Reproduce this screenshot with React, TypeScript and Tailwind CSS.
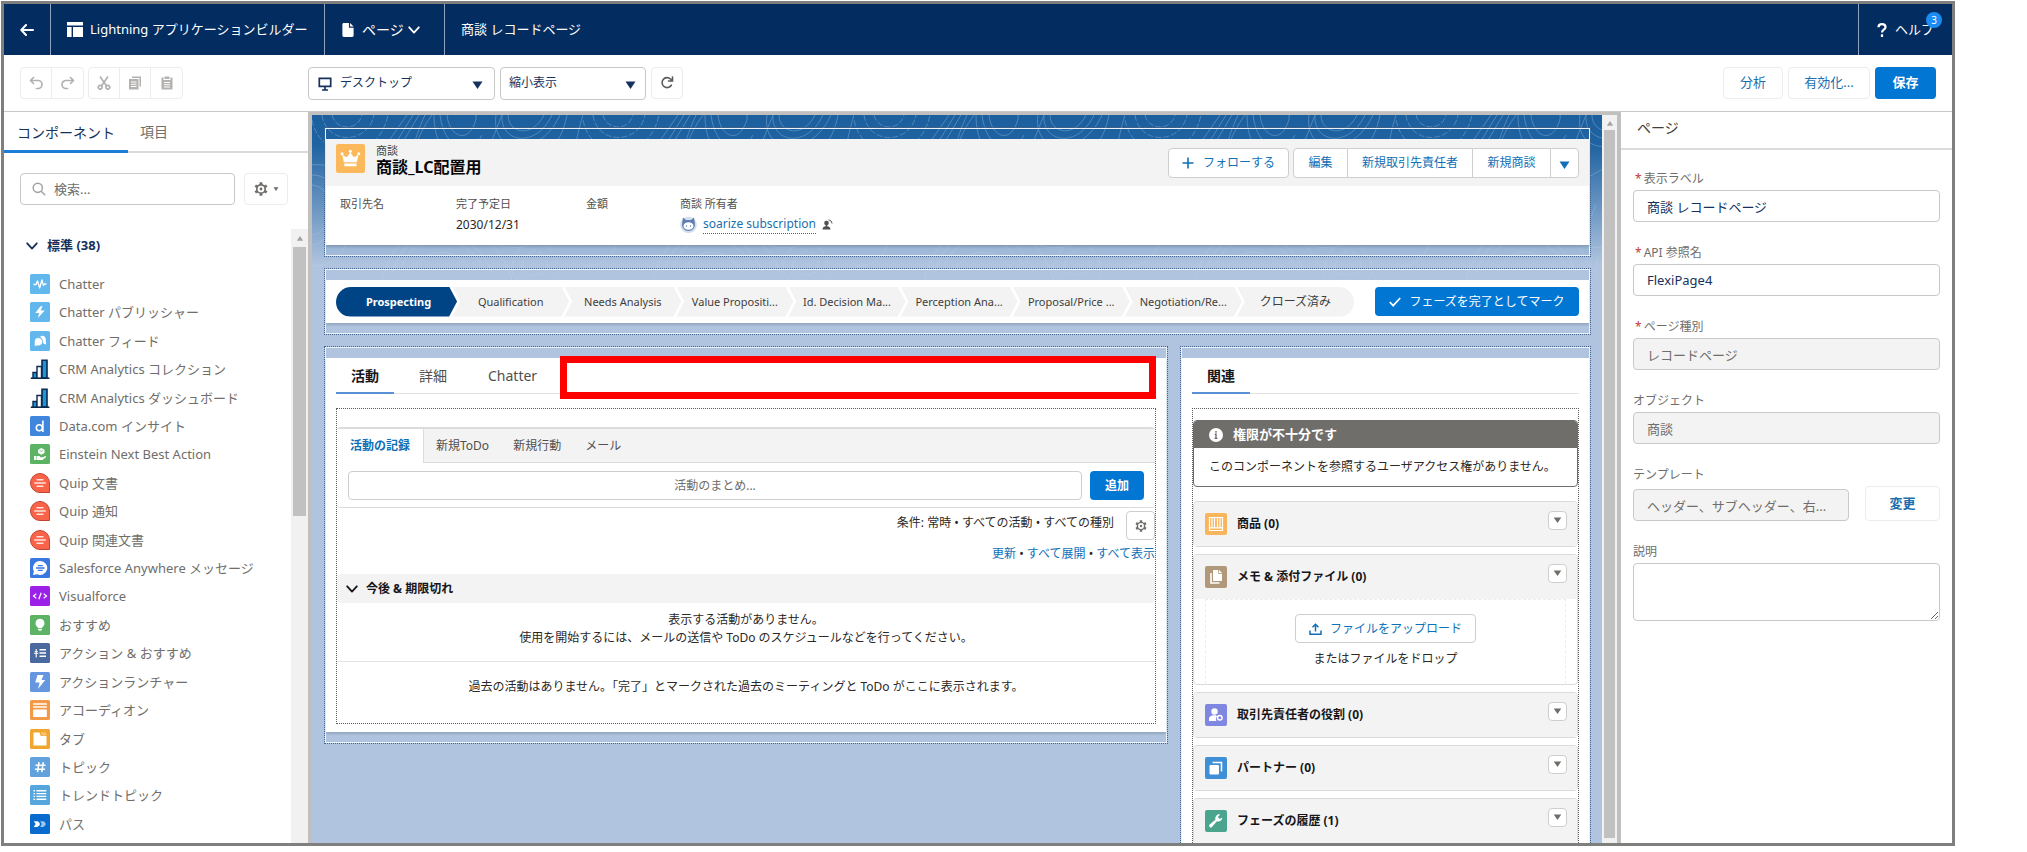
import React from "react";
import type { ReactNode } from "react";

const Tri = ({ className = "" }: { className?: string }) => (
  <svg viewBox="0 0 10 8" className={className} fill="currentColor" aria-hidden="true">
    <path d="M0 0.5h10L5 8z" />
  </svg>
);

const Chevron = ({ className = "" }: { className?: string }) => (
  <svg viewBox="0 0 12 8" className={className} fill="none" stroke="currentColor" strokeWidth="1.8" strokeLinecap="round" strokeLinejoin="round" aria-hidden="true">
    <path d="M1.2 1.3 6 6.6l4.8-5.3" />
  </svg>
);

const Gear = ({ className = "" }: { className?: string }) => (
  <svg viewBox="0 0 20 20" className={className} fill="none" stroke="currentColor" aria-hidden="true">
    <circle cx="10" cy="10" r="6" strokeWidth="2.400" />
    <circle cx="10" cy="10" r="2" fill="currentColor" stroke="none" />
    <path strokeWidth="4" d="M10 .5v3.500M10 16v3.500M1.800 5.200l3 1.800M15.200 13l3 1.800M1.800 14.800l3-1.800M15.200 7l3-1.800" />
  </svg>
);

const Tile = ({ color, children }: { color: string; children: ReactNode }) => (
  <svg viewBox="0 0 20 20" className="size-5 shrink-0" aria-hidden="true">
    <rect width="20" height="20" rx="1.6" fill={color} />
    {children}
  </svg>
);

const Bars = () => (
  <svg viewBox="0 0 20 20" className="size-5 shrink-0" aria-hidden="true">
    <path d="M3 19v-5.500h4V19" fill="#1b96d8" stroke="#0b2a4f" strokeWidth="1.4" />
    <path d="M7 19V7.500h4.500V19" fill="#fff" stroke="#0b2a4f" strokeWidth="1.4" />
    <path d="M12 19V1.200h5V19z" fill="#1b96d8" stroke="#0b2a4f" strokeWidth="1.6" />
    <path d="M.8 19.200h18.600" stroke="#0b2a4f" strokeWidth="1.600" />
  </svg>
);

const Quip = () => (
  <svg viewBox="0 0 20 20" className="size-5 shrink-0" aria-hidden="true">
    <path d="M10 .5a9.500 9.500 0 0 1 9.500 9.500v9.500H10A9.500 9.500 0 0 1 10 .5z" fill="#f9634a" stroke="#c14430" />
    <path d="M6.500 6.800h7M4.200 10h11.600M6.500 13.200h7" stroke="#ffe3dc" strokeWidth="1.500" />
  </svg>
);

const Bolt = ({ big = false }: { big?: boolean }) =>
  big ? (
    <path d="M7.500 3h6l-2 5h3.700L8 17l1.600-6.500H5.200z" fill="#fff" />
  ) : (
    <path d="M10.500 4.200 5.300 11h3.800l-1.200 4.900 6.800-7.400h-4.100l2-4.300z" fill="#fff" />
  );

const components: { name: string; icon: ReactNode }[] = [
  { name: "Chatter", icon: <Tile color="#62b7ed"><path d="M3.500 10.500H6l1.500-3.500 2.200 7 2.200-8 1.600 5.500 1-1.500h2" fill="none" stroke="#fff" strokeWidth="1.300" strokeLinejoin="round" /></Tile> },
  { name: "Chatter パブリッシャー", icon: <Tile color="#62b7ed"><Bolt /></Tile> },
  { name: "Chatter フィード", icon: <Tile color="#62b7ed"><path d="M10 5.500c3-1.800 6.300.4 5.800 3.500l.3 4.500-2.600-.7c-.3-3.600-1.500-5.200-3.500-7.300z" fill="#fff" /><path d="M8 6.800c3 0 4.500 2 4.500 4s-1.700 4-4.500 4c-1 0-3.600.3-3.600.3l.2-3.600C4.200 8.600 5.600 6.800 8 6.800z" fill="#fff" stroke="#62b7ed" strokeWidth=".5" /></Tile> },
  { name: "CRM Analytics コレクション", icon: <Bars /> },
  { name: "CRM Analytics ダッシュボード", icon: <Bars /> },
  { name: "Data.com インサイト", icon: <Tile color="#3f86dc"><circle cx="9.300" cy="11.700" r="3" fill="none" stroke="#fff" strokeWidth="1.600" /><path d="M12.900 4.500V16" stroke="#fff" strokeWidth="1.600" /></Tile> },
  { name: "Einstein Next Best Action", icon: <Tile color="#5cb363"><path d="m11.300 4 3.200 1.700v3.400l-3.200 1.700-3.200-1.700V5.700z" fill="#fff" /><path d="M4 12h2v4H4zM6.500 12h3l1 1.300h2l3-1.300.8 1-3.800 3H6.500z" fill="#fff" /><path d="m9.500 6.400 1.800.9 1.800-.9" stroke="#5cb363" strokeWidth=".7" fill="none" /></Tile> },
  { name: "Quip 文書", icon: <Quip /> },
  { name: "Quip 通知", icon: <Quip /> },
  { name: "Quip 関連文書", icon: <Quip /> },
  { name: "Salesforce Anywhere メッセージ", icon: <Tile color="#3a77e0"><path d="M10.300 3a7 7 0 1 1-3.100 13.300L3 17l.9-3.700A7 7 0 0 1 10.300 3z" fill="#fff" /><path d="M7.800 7.600h5M6 10h8.600M7.800 12.400h5" stroke="#3a77e0" strokeWidth="1.300" /></Tile> },
  { name: "Visualforce", icon: <Tile color="#9b20e8"><path d="M6.300 7.700 3.500 10l2.800 2.300M13.700 7.700l2.800 2.300-2.800 2.300M11.200 6.700l-2.400 6.600" stroke="#fff" strokeWidth="1.200" fill="none" /></Tile> },
  { name: "おすすめ", icon: <Tile color="#5cb363"><path d="M10 3.800a4.500 4.500 0 0 1 2.500 8.200l-.5 1.200H8L7.500 12A4.500 4.500 0 0 1 10 3.800zM8.200 14h3.600v.9l-1 .9H9.200l-1-.9z" fill="#fff" /></Tile> },
  { name: "アクション & おすすめ", icon: <Tile color="#4a6a9f"><path d="M9.500 6.700H16M9.500 10H16M9.500 13.300H16" stroke="#fff" strokeWidth="1.400" /><path d="M6.200 6v8.500M4 10.200h4.300M4.800 8.500h2.800" stroke="#fff" strokeWidth="1.100" /></Tile> },
  { name: "アクションランチャー", icon: <Tile color="#6796e0"><Bolt big /></Tile> },
  { name: "アコーディオン", icon: <Tile color="#f29a48"><path d="M3.200 4h13.600M3.200 7h13.600" stroke="#fff" strokeWidth="1.400" /><rect x="3.200" y="9.500" width="13.600" height="7.500" fill="#fff" /></Tile> },
  { name: "タブ", icon: <Tile color="#f0a62f"><path d="M3.500 3.500h6L10.800 7h5.700v9.500h-13z" fill="#fff" /><path d="M11 4h5M12 5.800h4.500" stroke="#ffd792" strokeWidth="1" /></Tile> },
  { name: "トピック", icon: <Tile color="#62a2dc"><path d="M9 5.200 7.500 15.200M13.300 5.200l-1.500 10M5.500 8.300h10M5 12.200h10" stroke="#fff" strokeWidth="1.500" /></Tile> },
  { name: "トレンドトピック", icon: <Tile color="#54a6dc"><path d="M6.500 5.800h9.800M6.500 8.600h9.800M6.500 11.400h9.800M6.500 14.200h9.800" stroke="#fff" strokeWidth="1.400" /><path d="M3.500 5.800h1.600M3.500 8.600h1.600M3.500 11.400h1.600M3.500 14.200h1.600" stroke="#fff" strokeWidth="1.400" /></Tile> },
  { name: "パス", icon: <Tile color="#0a6bcf"><path d="M3.800 7.200H7c1.600 0 2.900 1.800 2.900 2.900S8.600 13 7 13H3.800l1.800-2.900z" fill="#fff" /><path d="M10.200 7.200h2.600c1.600 0 2.900 1.800 2.900 2.900S14.400 13 12.800 13h-2.600l1.600-2.900z" fill="#9cc8f5" /></Tile> },
];

const stages = ["Qualification", "Needs Analysis", "Value Propositi...", "Id. Decision Ma...", "Perception Ana...", "Proposal/Price ...", "Negotiation/Re...", "クローズ済み"];

const Region = ({ children, className = "" }: { children: ReactNode; className?: string }) => (
  <section className={`border border-dotted border-[#42648f] ${className}`}>
    <div className="border border-[#e8f3fc] py-[10px]">{children}</div>
  </section>
);

const Contours = () => (
  <svg className="absolute inset-x-0 top-0 h-[170px] w-full" aria-hidden="true">
    <defs>
      <pattern id="contours" width="271" height="180" patternUnits="userSpaceOnUse">
        <g fill="none" stroke="#cfe2f5" strokeWidth="1" opacity="0.3">
          <path d="M20 0c4 16 26 16 30 0M10 0c4 30 46 30 52 0M0 5c8 42 66 44 76-5" strokeDasharray="6 2" />
          <path d="M95 0 60 50M101 0 64 60C40 90 60 120 80 100s10-60 40-100M107 0 80 45M113 0C90 50 92 90 130 110s60 10 70-20" />
          <path d="M135 0c2 20 18 28 26 12s-2-12 4-12M128 0c4 34 30 44 42 20M122 0c0 46 34 60 56 30l12-30" />
          <path d="M196 0c0 18 24 24 36 0M190 0c-2 28 34 34 50 0M184 0c-6 40 44 44 64 0" />
          <path d="M255 0c-6 30-20 40-40 50s-60 30-50 60 60 30 80 0 10-60 26-110" />
          <path d="M0 60c20 0 30 20 26 40s-20 30-26 30M0 70c14 2 20 14 18 28S6 120 0 120M0 50c30-4 46 24 40 60s-30 44-40 40" />
          <path d="M90 150c20-40 60-30 80 0M80 158c20-60 80-50 100 0M100 155c20-26 40-22 60 0M70 165c20-80 110-70 130 0" />
          <path d="M200 150c6-26 30-30 42-10s0 30-10 30-34 0-32-20zM210 150c4-16 18-18 24-6s-4 16-10 16-16 0-14-10z" strokeDasharray="9 3" />
        </g>
      </pattern>
      <linearGradient id="fadeDown" x1="0" y1="0" x2="0" y2="1">
        <stop offset="0" stopColor="#fff" />
        <stop offset="1" stopColor="#fff" stopOpacity="0.6" />
      </linearGradient>
      <mask id="contourMask">
        <rect width="100%" height="100%" fill="url(#fadeDown)" />
      </mask>
    </defs>
    <rect width="100%" height="100%" fill="url(#contours)" mask="url(#contourMask)" />
  </svg>
);

const ToolButton = ({ label, children, className = "" }: { label: string; children: ReactNode; className?: string }) => (
  <button type="button" aria-label={label} className={`flex h-[30px] w-[31px] items-center justify-center text-[#b4b2b0] ${className}`}>
    {children}
  </button>
);

function Header() {
  return (
    <header className="flex h-[51px] shrink-0 items-stretch bg-[#032d60] text-[13px] text-white">
      <button type="button" aria-label="戻る" className="flex w-[47px] items-center justify-center border-r border-[#8fa3bf]">
        <svg viewBox="0 0 14 12" className="h-3 w-[14px]" fill="none" stroke="#fff" strokeWidth="2" strokeLinecap="round" strokeLinejoin="round">
          <path d="M6 1 1.300 6 6 11M1.500 6H13" />
        </svg>
      </button>
      <div className="flex w-[274px] items-center gap-[7px] border-r border-[#8fa3bf] pl-4 whitespace-nowrap">
        <svg viewBox="0 0 16 15" className="h-[15px] w-4 shrink-0" fill="#fff">
          <path d="M0 0h16v3.600H0zM0 5h4.600v10H0zM6 5h10v10H6z" />
        </svg>
        Lightning アプリケーションビルダー
      </div>
      <button type="button" className="flex w-[120px] items-center border-r border-[#8fa3bf] pl-[17px] text-[14px]">
        <svg viewBox="0 0 12 15" className="mr-2 h-[14px] w-3" fill="#fff">
          <path d="M1.500 0H7v5h5v8.500c0 .8-.7 1.500-1.500 1.500h-9C.7 15 0 14.300 0 13.500v-12C0 .7.700 0 1.500 0z" />
          <path d="M8.200 0 12 3.800H8.200z" />
        </svg>
        ページ
        <Chevron className="ml-1 h-2 w-3" />
      </button>
      <h1 className="flex flex-1 items-center pl-4">商談 レコードページ</h1>
      <button type="button" className="flex w-[94px] items-center border-l border-[#8fa3bf] pl-[18px]">
        <svg viewBox="0 0 10 14" className="mr-2 h-[14px] w-[10px]" fill="none" stroke="#fff" strokeWidth="2.200">
          <path d="M1.500 4.200c0-4 7-4 7 0 0 2.500-3.500 2.600-3.500 5.300M5 11.300V14" />
        </svg>
        <span className="relative">
          ヘルプ
          <span className="absolute -top-2 -right-2 flex size-4 items-center justify-center rounded-full bg-[#1b8cf2] text-[10px] leading-4">3</span>
        </span>
      </button>
    </header>
  );
}

function Toolbar() {
  return (
    <div className="flex h-[57px] shrink-0 items-center border-b border-[#c9c9c9] bg-white pl-4 pr-4 text-[#16325c]">
      <div className="flex w-[288px] gap-1">
        <div className="flex divide-x divide-[#ececec] rounded border border-[#ececec]">
          <ToolButton label="元に戻す">
            <svg viewBox="0 0 14 14" className="size-[14px]" fill="none" stroke="currentColor" strokeWidth="1.700" strokeLinecap="round" strokeLinejoin="round"><path d="M4.500 1.500 1.500 4.500l3 3M1.500 4.500H9a4 4 0 0 1 0 8H7.500" /></svg>
          </ToolButton>
          <ToolButton label="やり直し">
            <svg viewBox="0 0 14 14" className="size-[14px]" fill="none" stroke="currentColor" strokeWidth="1.700" strokeLinecap="round" strokeLinejoin="round"><path d="m9.500 1.500 3 3-3 3M12.500 4.500H5a4 4 0 0 0 0 8h1.500" /></svg>
          </ToolButton>
        </div>
        <div className="flex divide-x divide-[#ececec] rounded border border-[#ececec]">
          <ToolButton label="切り取り">
            <svg viewBox="0 0 14 14" className="size-[14px]" fill="none" stroke="currentColor" strokeWidth="1.700"><path d="M3 .5 9.600 10M11 .5 4.400 10" /><circle cx="3.200" cy="11.300" r="1.900" /><circle cx="10.800" cy="11.300" r="1.900" /></svg>
          </ToolButton>
          <ToolButton label="コピー">
            <svg viewBox="0 0 14 14" className="size-[14px]" fill="currentColor"><path d="M4 .5h9v10h-1.500V2H4z" /><path fillRule="evenodd" d="M1 3h9.500v10.500H1zM3 5.500v1h5.500v-1zM3 7.800v1h5.500v-1zM3 10v1h5.500v-1z" /></svg>
          </ToolButton>
          <ToolButton label="貼り付け">
            <svg viewBox="0 0 14 14" className="size-[14px]" fill="currentColor"><path fillRule="evenodd" d="M1.500 1.500h2V4h7V1.500h2v12h-11zM4 6v1h6V6zM4 8.300v1h6v-1zM4 10.600v1h6v-1z" /><path d="M4.500.5h5V3h-5z" /></svg>
          </ToolButton>
        </div>
      </div>
      <div className="flex items-center gap-[5px] text-[12px]">
        <div className="relative">
          <svg viewBox="0 0 14 14" className="pointer-events-none absolute top-[10px] left-[10px] size-[14px]" fill="none" stroke="#16325c" strokeWidth="1.700"><path d="M1.300 1.300h11.400v8H1.300zM7 9.500V13M4 13h6" /></svg>
          <select aria-label="デバイス" className="h-[33px] w-[187px] appearance-none rounded border border-[#c9c9c9] bg-white pl-[31px]">
            <option>デスクトップ</option>
          </select>
          <Tri className="pointer-events-none absolute top-[14px] right-3 h-2 w-[11px]" />
        </div>
        <div className="relative">
          <select aria-label="表示倍率" className="h-[33px] w-[146px] appearance-none rounded border border-[#c9c9c9] bg-white pl-2">
            <option>縮小表示</option>
          </select>
          <Tri className="pointer-events-none absolute top-[14px] right-[10px] h-2 w-[11px]" />
        </div>
        <button type="button" aria-label="更新" className="flex size-8 items-center justify-center rounded border border-[#ececec] text-[#5c5a58]">
          <svg viewBox="0 0 14 14" className="size-[14px]" fill="none" stroke="currentColor" strokeWidth="1.600" strokeLinecap="round"><path d="M11.300 9.300A5 5 0 1 1 10.500 3l1.300 1.300M12.500 1v4H8.500" /></svg>
        </button>
      </div>
      <div className="ml-auto flex gap-[5px] text-[13px] text-[#1b6fae]">
        <button type="button" className="h-8 w-[60px] rounded border border-[#ececec]">分析</button>
        <button type="button" className="h-8 w-[82px] rounded border border-[#ececec]">有効化...</button>
        <button type="button" className="h-8 w-[61px] rounded bg-[#0176d3] font-bold text-white">保存</button>
      </div>
    </div>
  );
}

function Sidebar() {
  return (
    <aside className="flex w-[304px] shrink-0 flex-col bg-white">
      <div className="flex h-[41px] shrink-0 items-stretch border-b-2 border-[#dddbda] text-[14px] text-[#706e6b]">
        <button type="button" className="-mb-[2px] w-[124px] border-b-[3px] border-[#1b7fd8] pt-[2px] text-[#16325c]">コンポーネント</button>
        <button type="button" className="px-3">項目</button>
      </div>
      <div className="flex shrink-0 gap-[9px] pt-5 pl-4">
        <div className="relative">
          <svg viewBox="0 0 14 14" className="absolute top-[9px] left-3 size-[14px]" fill="none" stroke="#a5a3a1" strokeWidth="1.500"><circle cx="5.800" cy="5.800" r="4.600" /><path d="m9.200 9.200 4 4" /></svg>
          <input type="search" aria-label="検索" placeholder="検索..." className="h-8 w-[215px] rounded border border-[#c9c9c9] pl-[33px] text-[13px] placeholder:text-[#706e6b]" />
        </div>
        <button type="button" aria-label="設定" className="flex h-8 w-11 items-center justify-center gap-[5px] rounded border border-[#ececec] text-[#706e6b]">
          <Gear className="size-[14px]" />
          <Tri className="h-1 w-[6px]" />
        </button>
      </div>
      <div className="flex min-h-0 flex-1 pt-6">
        <div className="flex flex-1 flex-col pb-[9px] pl-[22px]">
          <button type="button" className="flex h-[34px] items-center gap-[9px] text-[13px] font-bold text-[#16325c]">
            <Chevron className="h-2 w-3" />
            標準 (38)
          </button>
          <ul className="flex flex-1 flex-col justify-between pt-[11px] pl-1 text-[13px] leading-5 text-[#706e6b]">
            {components.map((c) => (
              <li key={c.name} className="flex h-5 items-center gap-[9px] whitespace-nowrap">
                {c.icon}
                {c.name}
              </li>
            ))}
          </ul>
        </div>
        <div className="flex w-[17px] flex-col items-center bg-[#f1f1f1] pt-[7px]">
          <Tri className="h-[5px] w-2 rotate-180 text-[#a3a3a3]" />
          <div className="mt-[6px] h-[269px] w-[13px] bg-[#c1c1c1]" />
        </div>
      </div>
    </aside>
  );
}

function RecordHeader() {
  return (
    <div className="bg-white shadow-[0_2px_2px_rgba(0,0,0,0.15)]">
      <div className="flex h-[47px] items-center bg-[#f3f3f3] px-[10px]">
        <svg viewBox="0 0 29 29" className="mb-2 size-[29px]"><rect width="29" height="29" rx="2" fill="#fcb95b" /><path d="M6.200 10.500 10 13l1.300-.2 3-4.600 3.100 4.600 1.300.2 3.800-2.500-1.700 7.800H7.900zM8.300 19.600h12.200v2.700H8.300z" fill="#fff" /><circle cx="6" cy="9.700" r="1.500" fill="#fff" /><circle cx="14.400" cy="7.200" r="1.500" fill="#fff" /><circle cx="22.800" cy="9.700" r="1.500" fill="#fff" /></svg>
        <div className="ml-[11px] flex-1 self-start pt-[6px]">
          <div className="text-[11px] leading-3 text-[#444]">商談</div>
          <h2 className="text-[16px] leading-5 font-bold text-[#080707]">商談_LC配置用</h2>
        </div>
        <div className="flex gap-1 text-[12px] text-[#0f70b7]">
          <button type="button" className="flex h-[30px] w-[121px] items-center justify-center gap-[9px] rounded border border-[#d0cecd] bg-white">
            <svg viewBox="0 0 12 12" className="size-3" stroke="currentColor" strokeWidth="1.600"><path d="M6 .5v11M.5 6h11" /></svg>
            フォローする
          </button>
          <div className="flex h-[30px] divide-x divide-[#d0cecd] rounded border border-[#d0cecd] bg-white">
            <button type="button" className="w-[54px]">編集</button>
            <button type="button" className="w-[125px]">新規取引先責任者</button>
            <button type="button" className="w-[78px]">新規商談</button>
            <button type="button" aria-label="その他" className="flex w-[27px] items-center justify-center"><Tri className="mt-1 h-2 w-[11px]" /></button>
          </div>
        </div>
      </div>
      <dl className="flex h-[59px] pt-[10px] pl-[14px] text-[12px] text-[#2b2826] [&_dt]:text-[11px] [&_dt]:leading-4 [&_dt]:text-[#514f4d]">
        <div className="w-[116px]"><dt>取引先名</dt></div>
        <div className="w-[130px]"><dt>完了予定日</dt><dd className="pt-[3px] leading-5">2030/12/31</dd></div>
        <div className="w-[94px]"><dt>金額</dt></div>
        <div>
          <dt>商談 所有者</dt>
          <dd className="flex items-center gap-[6px] pt-[3px] leading-[18px]">
            <svg viewBox="0 0 17 18" className="h-[18px] w-[17px]"><circle cx="8.500" cy="9" r="8.300" fill="#d3dff0" /><path d="M3 1.500 6 4h5l3-2.500.8 5.500A6.500 6.500 0 1 1 2.200 7z" fill="#5f7fb0" /><ellipse cx="8.500" cy="10" rx="5" ry="3.800" fill="#fff" /><circle cx="6.500" cy="10" r=".7" fill="#5f7fb0" /><circle cx="10.500" cy="10" r=".7" fill="#5f7fb0" /></svg>
            <a href="#owner" className="border-b border-dotted border-[#1b6fae] text-[#1b6fae]">soarize subscription</a>
            <svg viewBox="0 0 11 12" className="h-3 w-[11px]" fill="#514f4d"><circle cx="4.500" cy="4" r="2.300" /><path d="M.5 10.500c0-2.500 2-3 3.200-3.300V6h1.600v1.200c1.200.3 3.200.8 3.200 3.300z" /><path d="M6.500 1c2 0 3.300 1.300 3.500 3.500" fill="none" stroke="#514f4d" /></svg>
          </dd>
        </div>
      </dl>
    </div>
  );
}

function StagePath() {
  return (
    <div className="flex h-[43px] items-center bg-white px-[10px] text-[11px] text-[#3e3e3c] shadow-[0_2px_2px_rgba(0,0,0,0.15)]">
      <ol className="flex flex-1 overflow-hidden rounded-full text-center leading-[30px]">
        <li className="flex-1 bg-[#014486] pl-1 font-bold text-white [clip-path:polygon(0_0,calc(100%-8px)_0,100%_50%,calc(100%-8px)_100%,0_100%)]">Prospecting</li>
        {stages.map((s) => (
          <li
            key={s}
            className="-ml-[5px] flex-1 bg-[#f3f3f3] whitespace-nowrap [clip-path:polygon(0_0,calc(100%-8px)_0,100%_50%,calc(100%-8px)_100%,0_100%,8px_50%)] last:text-[12px] last:[clip-path:polygon(0_0,100%_0,100%_100%,0_100%,8px_50%)]"
          >
            {s}
          </li>
        ))}
      </ol>
      <button type="button" className="ml-[21px] flex h-[29px] w-[204px] items-center justify-center gap-2 rounded bg-[#0176d3] text-[12px] whitespace-nowrap text-white">
        <svg viewBox="0 0 12 10" className="h-[10px] w-3" fill="none" stroke="#fff" strokeWidth="1.800"><path d="m.8 5 3.400 3.600L11.200 1" /></svg>
        フェーズを完了としてマーク
      </button>
    </div>
  );
}

function ActivityCard() {
  return (
    <div className="relative bg-white px-[10px] pb-2 shadow-[0_2px_2px_rgba(0,0,0,0.15)]">
      <div className="flex h-9 items-stretch border-b border-[#e5e3e2] text-[14px] text-[#514f4d]">
        <button type="button" className="-mb-px w-[58px] border-b-2 border-[#5a90d6] font-bold text-[#16161a]">活動</button>
        <button type="button" className="ml-[25px]">詳細</button>
        <button type="button" className="ml-[41px]">Chatter</button>
      </div>
      <div className="absolute -top-[2px] right-[10px] left-[234px] h-[43px] border-[7px] border-[#fe0000] bg-white" />
      <div className="mt-[14px] h-[316px] border border-dotted border-[#5e5c5a] pt-[18px]">
        <div className="rounded border-t-2 border-b border-[#dddbda] text-[12px]">
          <div className="flex h-[34px] bg-[#f3f3f3] text-[#514f4d]">
            <button type="button" className="w-[87px] border-r border-[#dddbda] bg-white font-bold text-[#0f70b7]">活動の記録</button>
            <div className="flex flex-1 gap-6 border-b border-[#dddbda] pl-3">
              <button type="button">新規ToDo</button>
              <button type="button">新規行動</button>
              <button type="button">メール</button>
            </div>
          </div>
          <div className="flex gap-2 px-[11px] pt-2 pb-[7px]">
            <input type="text" aria-label="活動のまとめ" placeholder="活動のまとめ..." className="h-[29px] min-w-0 flex-1 rounded border border-[#d0cecd] text-center placeholder:text-[#706e6b]" />
            <button type="button" className="h-[29px] w-[54px] rounded bg-[#0176d3] font-bold text-white">追加</button>
          </div>
        </div>
        <div className="mt-[3px] flex justify-end gap-3 text-[12px] leading-[24px] text-[#2b2826]">
          <p>条件: 常時 • すべての活動 • すべての種別</p>
          <button type="button" aria-label="フィルター" className="flex h-[29px] w-[29px] items-center justify-center rounded border border-[#d0cecd] text-[#706e6b]">
            <Gear className="size-3" />
          </button>
        </div>
        <p className="mt-1 text-right text-[12px] leading-5 text-[#2b2826] [&_a]:text-[#0f70b7]">
          <a href="#refresh">更新</a> • <a href="#expand">すべて展開</a> • <a href="#all">すべて表示</a>
        </p>
        <button type="button" className="mt-[10px] flex h-[29px] w-full items-center gap-2 rounded bg-[#f3f3f3] pl-[9px] text-[12px] font-bold text-[#16161a]">
          <Chevron className="h-2 w-3" />
          今後 &amp; 期限切れ
        </button>
        <p className="border-b border-[#e5e3e2] pt-2 pb-[14px] text-center text-[12px] leading-[18px] text-[#2b2826]">
          表示する活動がありません。
          <br />
          使用を開始するには、メールの送信や ToDo のスケジュールなどを行ってください。
        </p>
        <p className="pt-4 text-center text-[12px] leading-[18px] text-[#2b2826]">
          過去の活動はありません。「完了」とマークされた過去のミーティングと ToDo がここに表示されます。
        </p>
      </div>
    </div>
  );
}

const RelatedCard = ({ title, icon, color, children }: { title: string; icon: ReactNode; color: string; children?: ReactNode }) => (
  <article className="rounded border border-[#dddbda] bg-white">
    <div className="flex h-11 items-center rounded-t bg-[#f3f3f3] pr-[10px] pl-[11px]">
      <svg viewBox="0 0 22 22" className="size-[22px]"><rect width="22" height="22" rx="2" fill={color} />{icon}</svg>
      <h3 className="ml-[10px] flex-1 text-[12px] font-bold text-[#16161a]">{title}</h3>
      <button type="button" aria-label={`${title} メニュー`} className="mb-2 flex size-[19px] items-center justify-center rounded border border-[#d0cecd] bg-white text-[#706e6b]">
        <Tri className="h-[6px] w-[9px]" />
      </button>
    </div>
    {children}
  </article>
);

function RelatedColumn() {
  return (
    <div className="bg-white px-[10px] pb-2">
      <div className="flex h-9 items-stretch border-b border-[#e5e3e2]">
        <button type="button" className="-mb-px w-[58px] border-b-2 border-[#5a90d6] text-[14px] font-bold text-[#16161a]">関連</button>
      </div>
      <div className="mt-[14px] flex flex-col gap-[7px] border border-dotted border-[#5e5c5a] pt-[11px]">
        <div className="mb-[7px] overflow-hidden rounded border border-[#706e6b] text-[#2b2826]">
          <div className="flex h-[27px] items-center gap-[10px] bg-[#706e6b] pl-[15px] text-[13px] font-bold text-white">
            <svg viewBox="0 0 14 14" className="size-[14px]"><circle cx="7" cy="7" r="7" fill="#fff" /><path d="M7 3v1.800M5.800 6.300H7v4M5.500 10.400h3" stroke="#706e6b" strokeWidth="1.400" fill="none" /></svg>
            権限が不十分です
          </div>
          <p className="pl-[15px] text-[12px] leading-[38px] whitespace-nowrap">このコンポーネントを参照するユーザアクセス権がありません。</p>
        </div>
        <RelatedCard title="商品 (0)" color="#f9b55c" icon={<path d="M4.500 4.500h13v13h-13zM4.500 14.800h13M7 5v9.500M9.500 5v9.500M12.500 5v9.500M15 5v9.500" fill="none" stroke="#fff" strokeWidth="1.200" />} />
        <RelatedCard title="メモ & 添付ファイル (0)" color="#b0997a" icon={<><path d="M8 4h6.200L17 7v8H8z" fill="#fff" /><path d="M6 7v10h8.500" fill="none" stroke="#fff" strokeWidth="1.600" /><path d="M13.500 4v3.500H17" fill="none" stroke="#b0997a" strokeWidth=".8" /></>}>
          <div className="mx-[11px] flex h-[85px] flex-col items-center border border-b-0 border-dashed border-[#efedec] pt-[14px]">
            <button type="button" className="flex h-[29px] w-[181px] items-center justify-center gap-2 rounded border border-[#d0cecd] text-[12px] text-[#0f70b7]">
              <svg viewBox="0 0 13 12" className="h-3 w-[13px]" fill="none" stroke="currentColor" strokeWidth="1.500"><path d="M6.500 8.500V1.500M3.500 4.200l3-3 3 3M1 7.500v3.700h11V7.500" /></svg>
              ファイルをアップロード
            </button>
            <p className="pt-[6px] text-[12px] leading-5 text-[#2b2826]">またはファイルをドロップ</p>
          </div>
        </RelatedCard>
        <RelatedCard title="取引先責任者の役割 (0)" color="#7f87e0" icon={<><circle cx="9.500" cy="7.500" r="3.200" fill="#fff" /><path d="M4 17v-2.500c0-2 2.500-3 4-3.300h3l1 1.300c-1.500 1.500-1.300 3.500-.5 4.500z" fill="#fff" /><circle cx="14.800" cy="13.800" r="2.300" fill="none" stroke="#fff" strokeWidth="1.500" /></>} />
        <RelatedCard title="パートナー (0)" color="#3d8fd6" icon={<><rect x="4.500" y="8" width="9.500" height="9.500" rx="1" fill="#fff" /><path d="M7.500 5.500h9v9" fill="none" stroke="#fff" strokeWidth="1.500" /></>} />
        <RelatedCard title="フェーズの履歴 (1)" color="#4aa48e" icon={<path d="M17.300 7.500a4 4 0 0 1-5.400 3.800l-5 5.600a1.600 1.600 0 0 1-2.300-2.300l5.800-4.900A4 4 0 0 1 15.200 4.500L12.800 7l2 2z" fill="#fff" />} />
      </div>
    </div>
  );
}

function Canvas() {
  return (
    <main className="flex min-w-0 flex-1 overflow-hidden border-x-4 border-t-[3px] border-[#c2c0bf]">
      <div className="relative min-w-0 flex-1 overflow-hidden bg-[#b0c4df] bg-[linear-gradient(180deg,#1b5f9e_0,#1f63a2_30px,#b0c4df_150px)]">
        <Contours />
        <div className="relative flex flex-col gap-[11px] py-3 pr-[11px] pl-3">
          <Region><RecordHeader /></Region>
          <Region><StagePath /></Region>
          <div className="grid grid-cols-[844fr_411fr] items-start gap-3">
            <Region className="min-w-0"><ActivityCard /></Region>
            <Region className="min-w-0"><RelatedColumn /></Region>
          </div>
        </div>
      </div>
      <div className="flex w-[15px] shrink-0 flex-col items-center bg-[#f1f1f1] pt-[6px] pb-[5px]">
        <Tri className="h-[5px] w-2 shrink-0 rotate-180 text-[#a3a3a3]" />
        <div className="mt-1 w-[11px] flex-1 bg-[#c1c1c1]" />
      </div>
    </main>
  );
}

const Field = ({ id, label, required, children }: { id: string; label: string; required?: boolean; children: ReactNode }) => (
  <div>
    <label htmlFor={id} className="block pb-px text-[12px] leading-5 text-[#706e6b]">
      {required && <span className="mx-[2px] text-[#c23934]">*</span>}
      {label}
    </label>
    {children}
  </div>
);

const inputClass = "block h-8 w-full min-w-0 rounded border border-[#c9c9c9] px-[13px] text-[13px] text-[#16325c] disabled:bg-[#f3f3f3] disabled:text-[#706e6b] text-ellipsis";

function Properties() {
  return (
    <aside className="w-[331px] shrink-0 bg-white">
      <h2 className="h-[38px] border-b-2 border-[#dddbda] pl-4 text-[14px] leading-[32px] text-[#3e3e3c]">ページ</h2>
      <form className="flex flex-col gap-[21px] px-3 pt-[19px]" onSubmit={(e) => e.preventDefault()}>
        <Field id="label" label="表示ラベル" required><input id="label" className={inputClass} defaultValue="商談 レコードページ" /></Field>
        <Field id="api" label="API 参照名" required><input id="api" className={inputClass} defaultValue="FlexiPage4" /></Field>
        <Field id="type" label="ページ種別" required><input id="type" disabled className={inputClass} defaultValue="レコードページ" /></Field>
        <Field id="object" label="オブジェクト"><input id="object" disabled className={inputClass} defaultValue="商談" /></Field>
        <Field id="template" label="テンプレート">
          <div className="flex items-end gap-4">
            <input id="template" disabled className={inputClass} defaultValue="ヘッダー、サブヘッダー、右..." />
            <button type="button" className="h-[35px] w-[75px] shrink-0 rounded border border-[#ececec] text-[13px] font-bold text-[#1b6fae]">変更</button>
          </div>
        </Field>
        <Field id="description" label="説明"><textarea id="description" className="block h-[58px] w-full rounded border border-[#c9c9c9]" /></Field>
      </form>
    </aside>
  );
}

export default function App() {
  return (
    <div lang="ja" className="h-screen min-h-[852px] bg-white pt-px pr-[72px] pb-[6px] pl-px font-['Noto_Sans','Noto_Sans_CJK_JP',sans-serif]">
      <div className="flex h-full flex-col overflow-hidden border-[3px] border-[#7f807e]">
        <Header />
        <Toolbar />
        <div className="flex min-h-0 flex-1">
          <Sidebar />
          <Canvas />
          <Properties />
        </div>
      </div>
    </div>
  );
}
